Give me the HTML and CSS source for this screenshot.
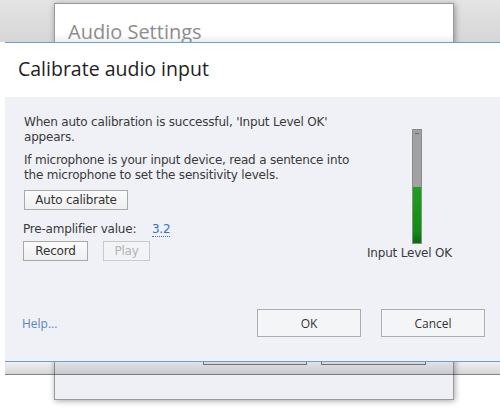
FILE: index.html
```html
<!DOCTYPE html>
<html>
<head>
<meta charset="utf-8">
<link rel="stylesheet" href="styles.css">
</head>
<body>
<div class="desk">
  <div class="back-window">
    <div class="back-head">Audio Settings</div>
    <div class="back-body">
      <div class="back-foot">
        <span class="back-btn"></span>
        <span class="back-btn wide"></span>
      </div>
    </div>
  </div>

  <div class="dialog">
    <div class="dialog-head">Calibrate audio input</div>
    <div class="dialog-body">
      <div class="content">
        <div class="left">
          <p class="para">When auto calibration is successful, 'Input Level OK' appears.</p>
          <p class="para">If microphone is your input device, read a sentence into the microphone to set the sensitivity levels.</p>
          <button class="btn auto">Auto calibrate</button>
          <div class="preamp">Pre-amplifier value: <span class="value">3.2</span></div>
          <div class="rec-row">
            <button class="btn rec">Record</button>
            <button class="btn play" disabled>Play</button>
          </div>
        </div>
        <div class="right">
          <div class="meter">
            <div class="meter-tick"></div>
            <div class="meter-level"></div>
          </div>
          <div class="meter-label">Input Level OK</div>
        </div>
      </div>
      <div class="foot">
        <span class="help">Help...</span>
        <div class="foot-btns">
          <button class="dbtn">OK</button>
          <button class="dbtn">Cancel</button>
        </div>
      </div>
    </div>
    <div class="dialog-shade"></div>
  </div>
</div>
</body>
</html>
```

FILE: styles.css
```css
* { box-sizing: border-box; }
html, body { margin: 0; padding: 0; }
body {
  width: 500px;
  height: 408px;
  overflow: hidden;
  background: #fff;
}
.desk {
  position: relative;
  width: 500px;
  height: 408px;
  background: linear-gradient(to bottom, #e4e4e4 0, #d6d6d6 42px, #ffffff 42px);
}

/* background window */
.back-window {
  position: absolute;
  left: 54px;
  top: 3px;
  width: 400px;
  height: 397px;
  border: 1px solid #9a9a9a;
  background: #eef0f5;
  box-shadow: 1px 1px 6px rgba(0,0,0,0.35);
  display: flex;
  flex-direction: column;
}
.back-head {
  height: 60px;
  padding: 15px 0 0 13px;
  background: linear-gradient(to bottom, #ffffff 50%, #ececec 64%);
  font-family: "Open Sans", "Noto Sans", sans-serif;
  font-size: 20px;
  color: #8c8c8c;
  line-height: 26px;
}
.back-body {
  flex: 1;
  display: flex;
  flex-direction: column;
  justify-content: flex-end;
}
.back-foot {
  display: flex;
  justify-content: flex-end;
  gap: 14px;
  padding: 0 27px 34px 0;
}
.back-btn {
  width: 104px;
  height: 24px;
  border: 1px solid #7c7c7c;
  background: #e6e7ea;
}
.back-btn.wide { width: 105px; }

/* front dialog */
.dialog {
  position: absolute;
  left: 5px;
  top: 42px;
  width: 500px;
  border-top: 1px solid #6a9fcf;
}
.dialog-head {
  height: 54px;
  background: #ffffff;
  padding: 13px 0 0 13px;
  font-family: "Open Sans", "Noto Sans", sans-serif;
  font-size: 19.5px;
  line-height: 26px;
  color: #1e1e1e;
}
.dialog-body {
  height: 265px;
  background: #eff1f6;
  border-bottom: 1px solid #6a9fcf;
  display: flex;
  flex-direction: column;
}
.dialog-shade {
  height: 13px;
  background: linear-gradient(to bottom, rgba(0,0,0,0.06), rgba(0,0,0,0.16));
  border-bottom: 1px solid rgba(0,0,0,0.45);
}

.content {
  display: flex;
  padding: 18px 0 0 19px;
  font-family: "DejaVu Sans", sans-serif;
  font-size: 12px;
  letter-spacing: -0.2px;
  color: #3a3a3a;
}
.left {
  width: 343px;
  display: flex;
  flex-direction: column;
  align-items: flex-start;
}
.para {
  margin: 0 0 8px 0;
  line-height: 15px;
  width: 340px;
}
.btn {
  font-family: inherit;
  font-size: 12px;
  letter-spacing: -0.2px;
  color: #333;
  height: 20px;
  padding: 0;
  border: 1px solid #a9a9a9;
  background: linear-gradient(to bottom, #fbfbfb, #efefef);
  line-height: 18px;
}
.btn.auto {
  width: 104px;
  margin-top: -1px;
}
.preamp {
  margin-top: 11px;
  line-height: 16px;
  margin-left: -1px;
}
.value {
  color: #3a6fc0;
  margin-left: 12px;
  border-bottom: 1px dotted #3a6fc0;
}
.rec-row {
  display: flex;
  gap: 15px;
  margin-top: 4px;
  margin-left: -1px;
}
.btn.rec { width: 65px; }
.btn.play {
  width: 47px;
  color: #b4b4b4;
  border-color: #c9c9c9;
  background: #f2f3f6;
}

.right {
  display: flex;
  flex-direction: column;
  align-items: flex-start;
  padding-top: 14px;
}
.meter {
  position: relative;
  margin-left: 45px;
  width: 10px;
  height: 115px;
  border: 1px solid #8c8c8c;
  background: #a2a2a2;
  display: flex;
  flex-direction: column;
  justify-content: flex-end;
}
.meter-tick {
  position: absolute;
  left: 2px;
  top: 3px;
  width: 4px;
  height: 2px;
  border-top: 1px solid #6a6a6a;
}
.meter-level {
  height: 56px;
  background: linear-gradient(to bottom, #1fa01f, #128c12 80%, #0b6a0b);
}
.meter-label {
  margin-top: 1px;
  line-height: 16px;
  white-space: nowrap;
}

.foot {
  margin-top: auto;
  display: flex;
  align-items: center;
  justify-content: space-between;
  padding: 0 20px 24px 17px;
  font-family: "Open Sans", "Noto Sans", sans-serif;
  font-size: 12px;
}
.help { color: #5a86bd; }
.foot-btns {
  display: flex;
  gap: 20px;
}
.dbtn {
  width: 104px;
  height: 28px;
  font-family: inherit;
  font-size: 12px;
  color: #333;
  border: 1px solid #adadad;
  background: #f4f5f7;
  padding: 0;
}
```
